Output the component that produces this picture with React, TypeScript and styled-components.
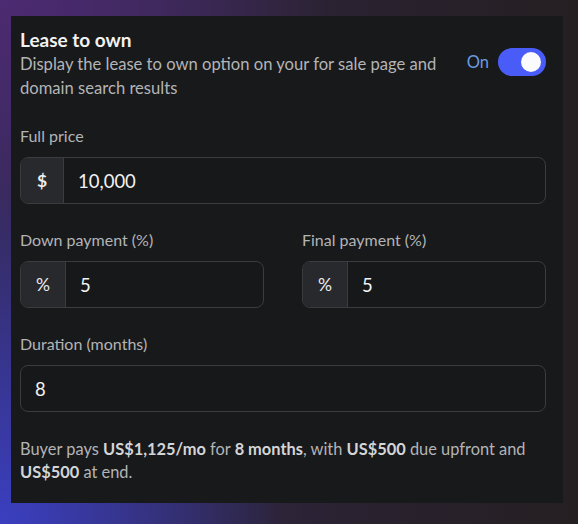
import { FC } from "react"
import styled, { createGlobalStyle } from "styled-components"

const GlobalStyle = createGlobalStyle`
  html, body {
    margin: 0;
    padding: 0;
  }
  body {
    width: 578px;
    height: 524px;
    overflow: hidden;
    font-family: Lato, "Open Sans", sans-serif;
    background:
      radial-gradient(ellipse 70% 90% at 0% 100%, #3a3fc0 0%, rgba(58, 63, 192, 0) 70%),
      radial-gradient(ellipse 70% 60% at 0% 0%, #4d2a72 0%, rgba(77, 42, 114, 0) 80%),
      linear-gradient(90deg, #352a5a 0%, #2a2230 60%, #251f22 100%);
  }
`

const StyledPanel = styled.section`
  box-sizing: border-box;
  margin: 16px 0 0 11px;
  width: 552px;
  height: 487px;
  padding: 12px 17px 0 9px;
  background-color: #18191b;
  display: flex;
  flex-direction: column;
  gap: 24px;
  color: #b3b4b6;
`

const StyledHeader = styled.div`
  display: flex;
  justify-content: space-between;
  align-items: flex-start;
`

const StyledTitle = styled.h2`
  margin: 0;
  font-size: 19px;
  line-height: 24px;
  font-weight: 700;
  color: #f2f2f3;
`

const StyledDesc = styled.p`
  margin: 0;
  font-size: 16.6px;
  line-height: 24px;
  max-width: 440px;
`

const StyledToggleBox = styled.div`
  display: flex;
  align-items: center;
  gap: 9px;
  margin-top: 20px;
`

const StyledToggleLabel = styled.span`
  font-size: 16.5px;
  color: #6b9be0;
`

const StyledSwitch = styled.button<{ on: boolean }>`
  position: relative;
  width: 48px;
  height: 28px;
  border: none;
  border-radius: 14px;
  padding: 0;
  background-color: ${({ on }) => (on ? "#4a5cf7" : "#3c3d40")};

  &::after {
    content: "";
    position: absolute;
    top: 4px;
    left: ${({ on }) => (on ? "23px" : "4px")};
    width: 20px;
    height: 20px;
    border-radius: 50%;
    background-color: #fbfbfd;
  }
`

const StyledFields = styled.div`
  display: flex;
  flex-direction: column;
  gap: 24px;
`

const StyledRow = styled.div`
  display: grid;
  grid-template-columns: 1fr 1fr;
  column-gap: 38px;
`

const StyledField = styled.div`
  display: flex;
  flex-direction: column;
  gap: 9px;
`

const StyledLabel = styled.label`
  font-size: 16px;
  line-height: 24px;
  color: #b3b4b6;
`

const StyledInputBox = styled.div`
  display: flex;
  height: 47px;
  box-sizing: border-box;
  border: 1px solid #3b3c3f;
  border-radius: 8px;
  overflow: hidden;
  background-color: #17181a;
`

const StyledAddon = styled.span<{ width: number; bold?: boolean }>`
  display: flex;
  align-items: center;
  justify-content: center;
  width: ${({ width }) => width}px;
  flex-shrink: 0;
  background-color: #28292c;
  border-right: 1px solid #3b3c3f;
  color: #ececee;
  font-size: 17.5px;
  font-weight: ${({ bold }) => (bold ? 700 : 400)};
`

const StyledValue = styled.span`
  display: flex;
  align-items: center;
  padding-left: 14px;
  font-size: 18.5px;
  color: #f2f2f3;
`

const StyledSummary = styled.p`
  margin: 1px 0 0;
  font-size: 16.4px;
  line-height: 23px;
  color: #b3b4b6;

  b {
    font-weight: 700;
    color: #d4d5d7;
  }
`

const InputField: FC<{ label: string; addon?: string; addonWidth?: number; bold?: boolean; value: string }> = ({
  label,
  addon,
  addonWidth = 44,
  bold,
  value,
}) => (
  <StyledField>
    <StyledLabel>{label}</StyledLabel>
    <StyledInputBox>
      {addon && (
        <StyledAddon width={addonWidth} bold={bold}>
          {addon}
        </StyledAddon>
      )}
      <StyledValue>{value}</StyledValue>
    </StyledInputBox>
  </StyledField>
)

const App: FC = () => {
  return (
    <>
      <GlobalStyle />
      <StyledPanel>
        <StyledHeader>
          <div>
            <StyledTitle>Lease to own</StyledTitle>
            <StyledDesc>Display the lease to own option on your for sale page and domain search results</StyledDesc>
          </div>
          <StyledToggleBox>
            <StyledToggleLabel>On</StyledToggleLabel>
            <StyledSwitch on={true} aria-label="Lease to own" />
          </StyledToggleBox>
        </StyledHeader>
        <StyledFields>
          <InputField label="Full price" addon="$" addonWidth={42} bold value="10,000" />
          <StyledRow>
            <InputField label="Down payment (%)" addon="%" value="5" />
            <InputField label="Final payment (%)" addon="%" value="5" />
          </StyledRow>
          <InputField label="Duration (months)" value="8" />
          <StyledSummary>
            Buyer pays <b>US$1,125/mo</b> for <b>8 months</b>, with <b>US$500</b> due upfront and <b>US$500</b> at end.
          </StyledSummary>
        </StyledFields>
      </StyledPanel>
    </>
  )
}

export default App
